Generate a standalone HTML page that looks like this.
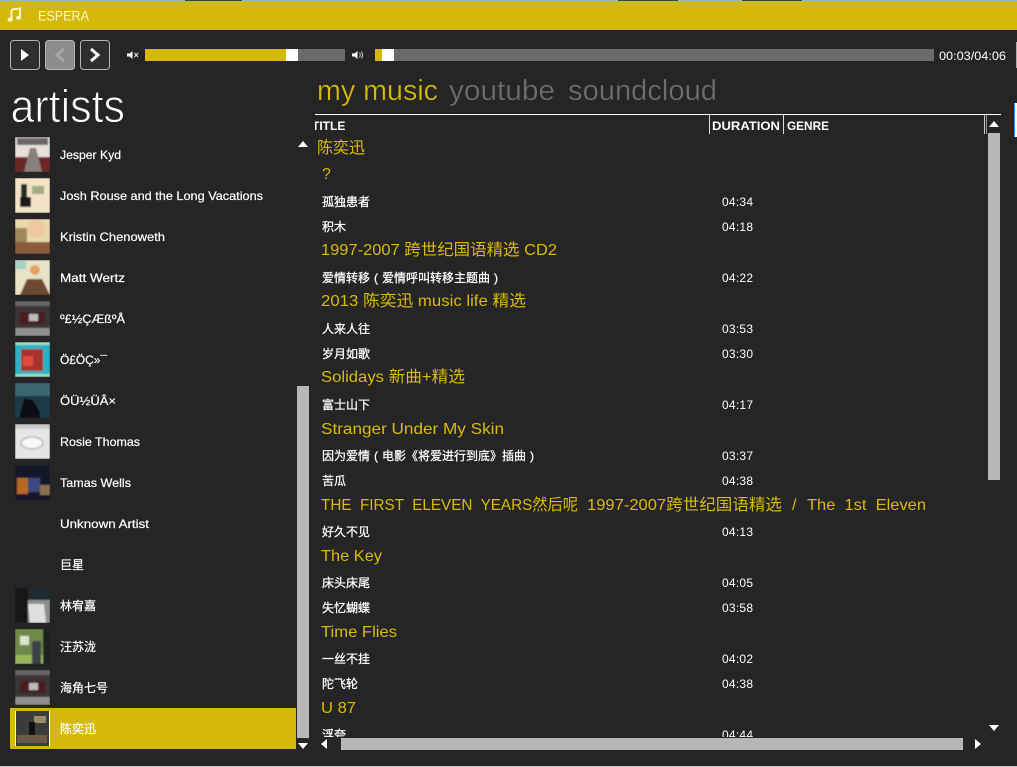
<!DOCTYPE html>
<html><head><meta charset="utf-8"><title>ESPERA</title>
<style>
html,body{margin:0;padding:0;background:#252525;width:1017px;height:767px;overflow:hidden}
svg{display:block}
text{font-family:"Liberation Sans","Noto Sans CJK SC",sans-serif;white-space:pre}
.a{font-size:12px;fill:#fff;stroke:#fff;stroke-width:.2}
.s{font-size:12px;fill:#fff;stroke:#fff;stroke-width:.25}
.d{font-size:12px;fill:#fff}
.g{font-size:16px;fill:#d9bb08}
.h{font-size:12px;font-weight:bold;fill:#fff}
.t{font-size:29px;stroke:#252525;stroke-width:.35}
</style></head><body>
<svg width="1017" height="767" viewBox="0 0 1017 767" xmlns="http://www.w3.org/2000/svg">
<defs><clipPath id="lc"><rect x="315" y="134" width="670" height="603"/></clipPath>
<clipPath id="hc"><rect x="315" y="115" width="390" height="20"/></clipPath>
<clipPath id="tc"><path d="M15 137h35v35h-35zM15 178h35v35h-35zM15 219h35v35h-35zM15 260h35v35h-35zM15 301h35v35h-35zM15 342h35v35h-35zM15 383h35v35h-35zM15 424h35v35h-35zM15 465h35v35h-35zM15 588h35v35h-35zM15 629h35v35h-35zM15 670h35v35h-35z"/></clipPath>
<filter id="b" x="-5%" y="-5%" width="110%" height="110%"><feGaussianBlur stdDeviation="0.8"/></filter></defs>
<rect width="1017" height="767" fill="#252525"/>
<rect width="1017" height="2" fill="#9fb0c0"/>
<rect x="185" width="57" height="1" fill="#444"/><rect x="618" width="60" height="1" fill="#444"/><rect x="742" width="60" height="1" fill="#444"/>
<rect y="2" width="1017" height="28" fill="#d4b80a"/>
<path d="M11.500 10V19.500M11.500 9.500L20 8.500V17.500" fill="none" stroke="#fff4c8" stroke-width="2"/>
<ellipse cx="10.200" cy="19.600" rx="2.600" ry="2.100" fill="#fff4c8"/><ellipse cx="18.600" cy="17.800" rx="2.600" ry="2.100" fill="#fff4c8"/>
<text x="38" y="20.500" font-size="13.500" fill="#fff8d0" textLength="51" lengthAdjust="spacingAndGlyphs">ESPERA</text>

<rect x="10.500" y="40.500" width="29" height="29" rx="3" fill="#2e2e2e" stroke="#b5b5b5"/>
<path d="M21 49L29 55L21 61Z" fill="#fff"/>
<rect x="45.500" y="40.500" width="29" height="29" rx="3" fill="#8c8c8c" stroke="#b5b5b5"/>
<path d="M64 49L57 55L64 61" fill="none" stroke="#a8a8a8" stroke-width="3"/>
<rect x="80.500" y="40.500" width="29" height="29" rx="3" fill="#2e2e2e" stroke="#b5b5b5"/>
<path d="M91 49L98 55L91 61" fill="none" stroke="#fff" stroke-width="3"/>

<path d="M127 53.500H129.500L132.500 51V59L129.500 56.500H127Z" fill="#fff"/>
<path d="M134.500 53L138 57M138 53L134.500 57" stroke="#ddd" stroke-width="1.200"/>
<rect x="145" y="49" width="200" height="12" fill="#6b6b6b"/>
<rect x="145" y="49" width="141" height="12" fill="#d4b80a"/>
<rect x="286" y="49" width="12" height="12" fill="#fff"/>
<path d="M352 53.500H354.500L357.500 51V59L354.500 56.500H352Z" fill="#fff"/>
<path d="M359.500 52.500Q361 55 359.500 57.500M361.500 51.500Q363.500 55 361.500 58.500" fill="none" stroke="#ccc" stroke-width="1"/>
<rect x="375" y="49" width="559" height="12" fill="#6b6b6b"/>
<rect x="375" y="49" width="7" height="12" fill="#d4b80a"/>
<rect x="382" y="49" width="12" height="12" fill="#fff"/>
<text x="939" y="60" font-size="12" fill="#fff" textLength="67" lengthAdjust="spacingAndGlyphs">00:03/04:06</text>
<rect x="1016" y="42" width="1" height="26" fill="#aaa"/>
<rect x="1014" y="103" width="3" height="34" fill="#fff"/><rect x="1014" y="103" width="1" height="34" fill="#3a8fe0"/>

<text x="10.500" y="122" font-size="46" fill="#fff" stroke="#252525" stroke-width="1" textLength="114.500" lengthAdjust="spacingAndGlyphs">artists</text>
<text class="t" x="317" y="100" fill="#d9bb08" textLength="121" lengthAdjust="spacingAndGlyphs">my music</text>
<text class="t" x="449" y="100" fill="#6e6e6e" textLength="106" lengthAdjust="spacingAndGlyphs">youtube</text>
<text class="t" x="568" y="100" fill="#6e6e6e" textLength="149" lengthAdjust="spacingAndGlyphs">soundcloud</text>

<!-- thumbnails -->
<g clip-path="url(#tc)"><g filter="url(#b)">
<g><rect x="15" y="137" width="35" height="35" fill="#e6e0dd"/><rect x="15" y="157" width="35" height="15" fill="#6d2626"/><path d="M24 172L30 148L36 148L42 172Z" fill="#88807c"/><rect x="17" y="138" width="31" height="7" fill="#6c6666"/></g>
<g><rect x="15" y="178" width="35" height="35" fill="#f3e3c7"/><rect x="21" y="184" width="6" height="13" fill="#1d3020"/><rect x="20" y="197" width="11" height="10" fill="#1b1712"/><rect x="32" y="186" width="12" height="8" fill="#a3aa85"/></g>
<g><rect x="15" y="219" width="35" height="35" fill="#e8d9ac"/><rect x="15" y="228" width="12" height="26" fill="#a08a5c"/><ellipse cx="36" cy="229" rx="9" ry="9" fill="#efc8a0"/><rect x="15" y="242" width="35" height="12" fill="#8a5b3e"/></g>
<g><rect x="15" y="260" width="35" height="35" fill="#e7e3c6"/><circle cx="35" cy="270" r="5" fill="#e4a060"/><path d="M20 295L27 279H42L50 295Z" fill="#6e4a30"/><rect x="16" y="261" width="10" height="8" fill="#a5d0c4"/></g>
<g><rect x="15" y="301" width="35" height="35" fill="#3b3634"/><rect x="15" y="301" width="35" height="5" fill="#666"/><rect x="20" y="312" width="25" height="12" fill="#4a1f22"/><rect x="29" y="314" width="9" height="7" fill="#bbb"/><rect x="15" y="328" width="35" height="8" fill="#8f8f8f"/></g>
<g><rect x="15" y="342" width="35" height="35" fill="#2ab2c4"/><rect x="21" y="349" width="22" height="22" fill="#a8302e"/><rect x="23" y="356" width="10" height="10" fill="#e34a3c"/><rect x="15" y="342" width="35" height="3" fill="#9fdcc8"/><rect x="15" y="374" width="35" height="3" fill="#9fdcc8"/></g>
<g><rect x="15" y="383" width="35" height="35" fill="#1a3a48"/><rect x="15" y="383" width="35" height="13" fill="#3d6672"/><path d="M19 418L24 398L33 400L40 412L40 418Z" fill="#0a1014"/></g>
<g><rect x="15" y="424" width="35" height="35" fill="#e4e6e5"/><ellipse cx="32" cy="443" rx="11" ry="6" fill="#f6f6f6" stroke="#999"/><rect x="15" y="424" width="35" height="5" fill="#ccc"/></g>
<g><rect x="15" y="465" width="35" height="35" fill="#17142a"/><rect x="17" y="478" width="11" height="16" fill="#b46a20"/><rect x="28" y="478" width="12" height="14" fill="#3a4a80"/><rect x="40" y="485" width="10" height="10" fill="#877048"/></g>
<g><rect x="15" y="588" width="35" height="35" fill="#8f8f8f"/><rect x="15" y="588" width="13" height="35" fill="#161616"/><rect x="28" y="588" width="22" height="12" fill="#1a2a30"/><path d="M30 623L28 604L44 604L46 623Z" fill="#e0e0e0"/></g>
<g><rect x="15" y="629" width="35" height="35" fill="#6f8a48"/><rect x="15" y="655" width="35" height="9" fill="#96b858"/><rect x="43" y="629" width="7" height="35" fill="#1e241a"/><rect x="32" y="641" width="9" height="23" fill="#3c4048"/><rect x="20" y="636" width="9" height="9" fill="#dbe5d0"/></g>
<g><rect x="15" y="670" width="35" height="35" fill="#3b3634"/><rect x="15" y="670" width="35" height="5" fill="#666"/><rect x="20" y="681" width="25" height="12" fill="#4a1f22"/><rect x="29" y="683" width="9" height="7" fill="#bbb"/><rect x="15" y="697" width="35" height="8" fill="#8f8f8f"/></g>
</g></g>

<rect x="10" y="708" width="286" height="41" fill="#d4b80a"/>
<g><rect x="15" y="711" width="35" height="35" fill="#fff"/><rect x="16" y="711" width="33" height="35" fill="#3a3c3a"/><rect x="34" y="716" width="12" height="7" fill="#9b8a70"/><rect x="29" y="722" width="6" height="18" fill="#111"/><rect x="17" y="735" width="30" height="8" fill="#6a5a48"/></g>

<!-- artists -->
<text class="a" x="60" y="159" textLength="61" lengthAdjust="spacingAndGlyphs">Jesper Kyd</text>
<text class="a" x="60" y="200" textLength="203" lengthAdjust="spacingAndGlyphs">Josh Rouse and the Long Vacations</text>
<text class="a" x="60" y="241" textLength="105" lengthAdjust="spacingAndGlyphs">Kristin Chenoweth</text>
<text class="a" x="60" y="282" textLength="65" lengthAdjust="spacingAndGlyphs">Matt Wertz</text>
<text class="a" x="60" y="323" textLength="65" lengthAdjust="spacingAndGlyphs">º£½ÇÆßºÅ</text>
<text class="a" x="60" y="364" textLength="47" lengthAdjust="spacingAndGlyphs">Ö£ÖÇ»¯</text>
<text class="a" x="60" y="405" textLength="56" lengthAdjust="spacingAndGlyphs">ÖÜ½ÜÂ×</text>
<text class="a" x="60" y="446" textLength="80" lengthAdjust="spacingAndGlyphs">Rosie Thomas</text>
<text class="a" x="60" y="487" textLength="71" lengthAdjust="spacingAndGlyphs">Tamas Wells</text>
<text class="a" x="60" y="528" textLength="89" lengthAdjust="spacingAndGlyphs">Unknown Artist</text>
<text class="a" x="60" y="569">巨星</text>
<text class="a" x="60" y="610">林宥嘉</text>
<text class="a" x="60" y="651">汪苏泷</text>
<text class="a" x="60" y="692">海角七号</text>
<text class="a" x="60" y="733">陈奕迅</text>

<!-- left scrollbar -->
<path d="M298 147L303 141L308 147Z" fill="#fff"/>
<rect x="297" y="386" width="12" height="352" fill="#b7b7b7"/>
<path d="M298 743L308 743L303 749Z" fill="#fff"/>

<!-- table head -->
<rect x="315" y="114" width="686" height="1" fill="#fff"/>
<rect x="709" y="115" width="1" height="19" fill="#ddd"/>
<rect x="783" y="115" width="1" height="19" fill="#ddd"/>
<rect x="984" y="115" width="1" height="19" fill="#ccc"/><rect x="986" y="115" width="1" height="19" fill="#999"/>
<g clip-path="url(#hc)"><text class="h" x="312" y="130">TITLE</text></g>
<text class="h" x="712" y="130" textLength="68" lengthAdjust="spacingAndGlyphs">DURATION</text>
<text class="h" x="787" y="130" textLength="42" lengthAdjust="spacingAndGlyphs">GENRE</text>

<!-- list -->
<g clip-path="url(#lc)">
<text class="g" x="317" y="153">陈奕迅</text>
<text class="g" x="322" y="179">?</text>
<text class="s" x="322" y="206">孤独患者</text><text class="d" x="722" y="206" textLength="31">04:34</text>
<text class="s" x="322" y="231">积木</text><text class="d" x="722" y="231" textLength="31">04:18</text>
<text class="g" x="321" y="255" textLength="236" lengthAdjust="spacingAndGlyphs">1997-2007 跨世纪国语精选 CD2</text>
<text class="s" y="282"><tspan x="322">爱情转移</tspan><tspan x="374">(</tspan><tspan x="382">爱情呼叫转移主题曲</tspan><tspan x="494">)</tspan></text><text class="d" x="722" y="282" textLength="31">04:22</text>
<text class="g" x="321" y="306" textLength="205" lengthAdjust="spacingAndGlyphs">2013 陈奕迅 music life 精选</text>
<text class="s" x="322" y="333">人来人往</text><text class="d" x="722" y="333" textLength="31">03:53</text>
<text class="s" x="322" y="358">岁月如歌</text><text class="d" x="722" y="358" textLength="31">03:30</text>
<text class="g" x="321" y="382" textLength="144" lengthAdjust="spacingAndGlyphs">Solidays 新曲+精选</text>
<text class="s" x="322" y="409">富士山下</text><text class="d" x="722" y="409" textLength="31">04:17</text>
<text class="g" x="321" y="434" textLength="183" lengthAdjust="spacingAndGlyphs">Stranger Under My Skin</text>
<text class="s" y="460"><tspan x="322">因为爱情</tspan><tspan x="374">(</tspan><tspan x="382">电影《将爱进行到底》插曲</tspan><tspan x="530">)</tspan></text><text class="d" x="722" y="460" textLength="31">03:37</text>
<text class="s" x="322" y="485">苦瓜</text><text class="d" x="722" y="485" textLength="31">04:38</text>
<text class="g" x="321" y="510" textLength="257" lengthAdjust="spacingAndGlyphs">THE  FIRST  ELEVEN  YEARS然后呢</text>
<text class="g" x="587" y="510" textLength="195" lengthAdjust="spacingAndGlyphs">1997-2007跨世纪国语精选</text>
<text class="g" x="792" y="510">/</text>
<text class="g" x="807" y="510" textLength="119" lengthAdjust="spacingAndGlyphs">The  1st  Eleven</text>
<text class="s" x="322" y="536">好久不见</text><text class="d" x="722" y="536" textLength="31">04:13</text>
<text class="g" x="321" y="561" textLength="61" lengthAdjust="spacingAndGlyphs">The Key</text>
<text class="s" x="322" y="587">床头床尾</text><text class="d" x="722" y="587" textLength="31">04:05</text>
<text class="s" x="322" y="612">失忆蝴蝶</text><text class="d" x="722" y="612" textLength="31">03:58</text>
<text class="g" x="321" y="637" textLength="76" lengthAdjust="spacingAndGlyphs">Time Flies</text>
<text class="s" x="322" y="663">一丝不挂</text><text class="d" x="722" y="663" textLength="31">04:02</text>
<text class="s" x="322" y="688">陀飞轮</text><text class="d" x="722" y="688" textLength="31">04:38</text>
<text class="g" x="321" y="713" textLength="35" lengthAdjust="spacingAndGlyphs">U 87</text>
<text class="s" x="322" y="739">浮夸</text><text class="d" x="722" y="739" textLength="31">04:44</text>
</g>

<!-- right scrollbars -->
<path d="M989 127L994 121L999 127Z" fill="#fff"/>
<rect x="988" y="133" width="12" height="347" fill="#b7b7b7"/>
<path d="M989 725L999 725L994 731Z" fill="#fff"/>
<path d="M327 739V749L321 744Z" fill="#fff"/>
<rect x="341" y="738" width="622" height="12" fill="#b7b7b7"/>
<path d="M975 739V749L981 744Z" fill="#fff"/>
<rect y="766" width="1017" height="1" fill="#c8c8c8"/>
</svg>
</body></html>
